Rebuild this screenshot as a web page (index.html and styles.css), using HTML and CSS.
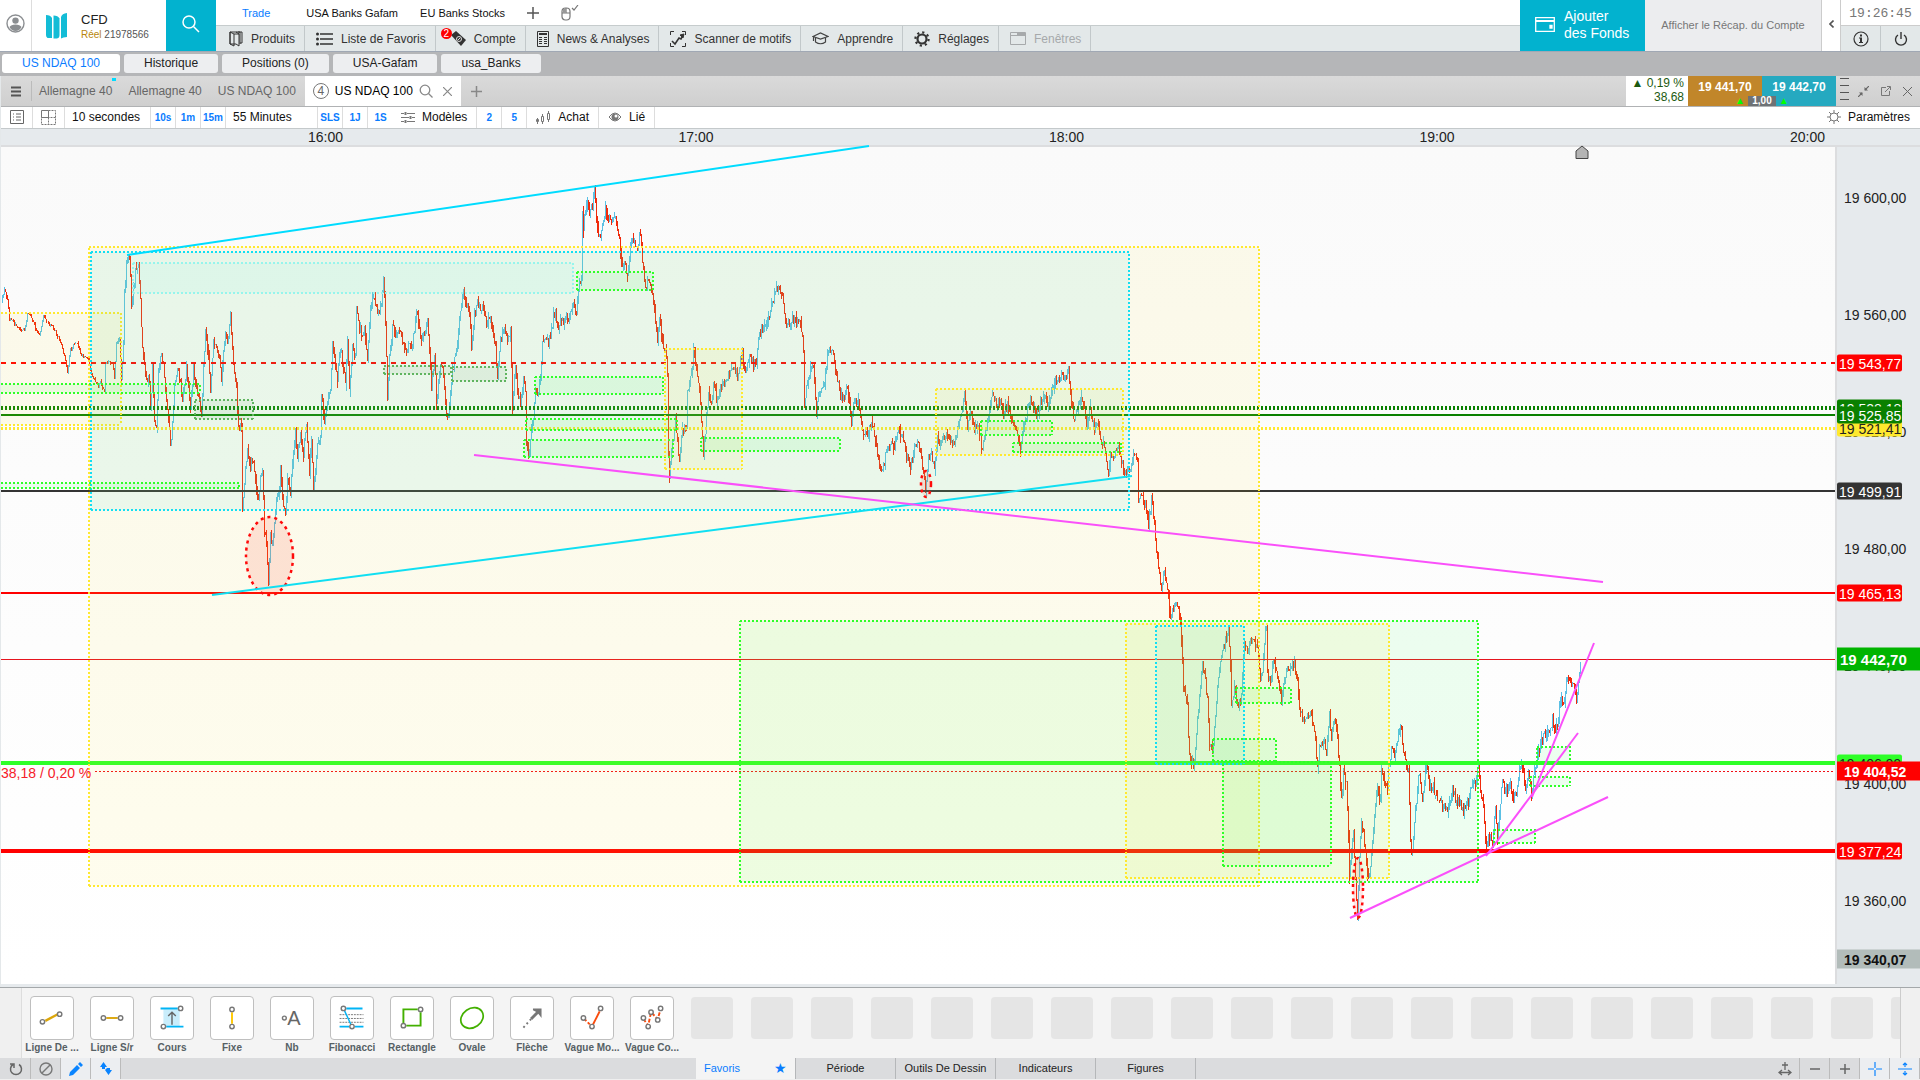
FILE: index.html
```html
<!DOCTYPE html>
<html lang="fr">

<head>
  <meta charset="UTF-8">
  <meta name="viewport" content="width=device-width, initial-scale=1.0">
  <title>US NDAQ 100</title>
  <link rel="stylesheet" href="styles.css">
</head>

<body>
  <!-- Header -->
  <header class="header">
    <button class="avatar" aria-label="Profil">
      <svg width="19" height="19" viewBox="0 0 19 19"><circle cx="9.5" cy="9.5" r="8.5" fill="#fff" stroke="#8b8e91" stroke-width="1.4"/><circle cx="9.5" cy="6.6" r="3.2" fill="#8b8e91"/><path d="M3.5 13q1.500-2.500 6-2.500t6 2.500q-2 4-6 4t-6-4z" fill="#8b8e91"/></svg>
    </button>
    <div class="brand">
      <svg width="22" height="26" viewBox="0 0 22 26" fill="#13bcd6"><path d="M0 2q4.500 0 6 3v20H1.500Q0 24 0 22z"/><path d="M7.500 2.500q4.500 0 6 3V22q0 3-2.500 3.500H7.500z"/><path d="M15 4q1-3.500 6-4v24q-4 0-6 1.500z"/></svg>
      <div>
        <div class="brand-name">CFD</div>
        <div class="brand-account"><span>Réel</span> 21978566</div>
      </div>
    </div>
    <button class="search" aria-label="Rechercher">
      <svg width="20" height="20" viewBox="0 0 20 20" fill="none" stroke="#fff" stroke-width="1.500"><circle cx="8" cy="8" r="6"/><path d="M12.500 12.500L18 18"/></svg>
    </button>
    <div class="header-main">
      <nav class="workspaces">
        <a href="#" class="active">Trade</a>
        <a href="#">USA Banks Gafam</a>
        <a href="#">EU Banks Stocks</a>
        <button aria-label="Ajouter un espace"><svg width="12" height="12" viewBox="0 0 12 12" stroke="#555" stroke-width="1.500"><path d="M6 0v12M0 6h12"/></svg></button>
        <button aria-label="Souris"><svg width="18" height="16" viewBox="0 0 18 16" fill="none" stroke="#777" stroke-width="1.200"><rect x="1" y="3" width="8" height="12" rx="3.500"/><path d="M5 3v5M1 8h8M11 3l2 2 4-5"/><path d="M2 4h3v4H2z" fill="#999" stroke="none"/></svg></button>
      </nav>
      <nav class="menu">
        <button><svg width="14" height="16" viewBox="0 0 14 16" fill="none" stroke="#333"><path d="M1 1h6l3 2v12L7 13H1zM1 1l4 2v12L1 13zM5 3h5M7 1h4v12M9 1h4v11h-2"/></svg>Produits</button>
        <button><svg width="17" height="14" viewBox="0 0 17 14" fill="#333"><circle cx="1.500" cy="2" r="1.500"/><circle cx="1.500" cy="7" r="1.500"/><circle cx="1.500" cy="12" r="1.500"/><path d="M4 1.300h13v1.400H4zM4 6.300h13v1.400H4zM4 11.300h13v1.400H4z"/></svg>Liste de Favoris</button>
        <button class="menu-account"><span class="badge">2</span><svg width="15" height="15" viewBox="0 0 15 15"><path d="M0 4l5-4 10 9-5 6z" fill="#333"/><circle cx="8" cy="8" r="2.500" fill="none" stroke="#ddd"/><path d="M7 9l2-2" stroke="#ddd"/></svg>Compte</button>
        <button><svg width="12" height="16" viewBox="0 0 12 16" fill="none" stroke="#333"><path d="M.5.5h11v15H.5z"/><path d="M2 3h8" stroke-width="2"/><path d="M2 6.500h3M7 6.500h3M2 8.500h3M7 8.500h3M2 10.500h3M7 10.500h3M2 12.500h3M7 12.500h3"/></svg>News &amp; Analyses</button>
        <button><svg width="16" height="16" viewBox="0 0 16 16" fill="none" stroke="#333"><path d="M.5 4V.500H4M12 .5h3.500V4M15.500 12v3.500H12M4 15.500H.500V12"/><path d="M2 10l3 3 4-6 2 1 2-4" stroke-width="1.600"/><path d="M10 4l4-1-1 4z" fill="#333"/></svg>Scanner de motifs</button>
        <button><svg width="17" height="13" viewBox="0 0 17 13" fill="none" stroke="#444" stroke-width="1.200"><path d="M1 4.500L8.500 1 16 4.500 8.500 7zM3.500 6v4q5 3.500 10 0V6M1.500 5v4"/></svg>Apprendre</button>
        <button><svg width="16" height="16" viewBox="0 0 16 16" fill="none" stroke="#333"><circle cx="8" cy="8" r="4.500" stroke-width="2.200"/><circle cx="8" cy="8" r="6.600" stroke-width="2.200" stroke-dasharray="2.200 2.980"/></svg>Réglages</button>
        <button disabled><svg width="16" height="13" viewBox="0 0 16 13" fill="none" stroke="#a6a9ab"><path d="M.5.500h15v12H.500zM.500 3.500h15"/><path d="M7 2h8" stroke-width="2"/></svg>Fenêtres</button>
      </nav>
    </div>
    <button class="funds">
      <svg width="20" height="15" viewBox="0 0 20 15" fill="none" stroke="#fff" stroke-width="1.300"><path d="M.7.700h18.600v13.600H.700z"/><path d="M1 4h18" stroke-width="2"/><path d="M15 8.500h2v2.500h-2z" fill="#fff"/></svg>
      <span>Ajouter<br>des Fonds</span>
    </button>
    <button class="recap">Afficher le Récap. du Compte</button>
    <button class="collapse" aria-label="Réduire"><svg width="5" height="8" viewBox="0 0 5 8" fill="none" stroke="#555" stroke-width="1.600"><path d="M4.500.500L1 4l3.500 3.500"/></svg></button>
    <div class="status">
      <div class="clock">19:26:45</div>
      <div class="status-buttons">
        <button aria-label="Informations"><svg width="16" height="16" viewBox="0 0 16 16"><circle cx="8" cy="8" r="7" fill="none" stroke="#333" stroke-width="1.200"/><path d="M7 3.500h2v2H7zM6 6.500h3v4.500h1v1H6v-1h1V7.500H6z" fill="#333"/></svg></button>
        <button aria-label="Déconnexion"><svg width="14" height="16" viewBox="0 0 14 16" fill="none" stroke="#333" stroke-width="1.400"><path d="M4 4a5.500 5.500 0 1 0 6 0M7 1v7"/></svg></button>
      </div>
    </div>
  </header>

  <nav class="panels">
    <a href="#" class="active">US NDAQ 100</a>
    <a href="#">Historique</a>
    <a href="#">Positions (0)</a>
    <a href="#">USA-Gafam</a>
    <a href="#">usa_Banks</a>
  </nav>

  <!-- Chart window -->
  <main class="window">
    <div class="window-tabs">
      <button class="burger" aria-label="Menu"><svg width="10" height="11" viewBox="0 0 10 11" stroke="#555" stroke-width="2"><path d="M0 1.500h10M0 5.500h10M0 9.500h10"/></svg></button>
      <a href="#" class="window-tab">Allemagne 40<i class="dot"></i></a>
      <a href="#" class="window-tab">Allemagne 40</a>
      <a href="#" class="window-tab">US NDAQ 100</a>
      <div class="window-tab active">
        <span class="count">4</span>US NDAQ 100
        <svg width="14" height="14" viewBox="0 0 14 14" fill="none" stroke="#888" stroke-width="1.300"><circle cx="6" cy="6" r="4.800"/><path d="M9.500 9.500l4 4"/></svg>
        <button aria-label="Fermer"><svg width="9" height="9" viewBox="0 0 9 9" stroke="#888" stroke-width="1.200"><path d="M0 0l9 9M9 0L0 9"/></svg></button>
      </div>
      <button class="add" aria-label="Nouvel onglet"><svg width="11" height="11" viewBox="0 0 11 11" stroke="#888" stroke-width="1.500"><path d="M5.500 0v11M0 5.500h11"/></svg></button>
      <div class="change"><div><span class="up">▲</span> 0,19 %</div><div>38,68</div></div>
      <div class="quotes">
        <button class="sell">19 441,70</button>
        <button class="buy">19 442,70</button>
        <div class="spread"><span>▲</span><b>1,00</b><span>▲</span></div>
      </div>
      <div class="window-tools">
        <svg width="10" height="28" viewBox="0 0 10 28" stroke="#555"><path d="M0 1.500h9M0 8.500h9M0 15.500h9M0 22.500h9"/></svg>
        <button aria-label="Réduire"><svg width="11" height="11" viewBox="0 0 11 11" stroke="#666" fill="#666"><path d="M11 0L7 4M0 11l4-4" stroke-width="1.200"/><path d="M6.500 1v3.500H10zM4.500 10V6.500H1z" stroke="none"/></svg></button>
        <button aria-label="Détacher"><svg width="10" height="10" viewBox="0 0 10 10" fill="none" stroke="#777"><path d="M5 1.500H.500v8h8V5M4 6l5-5M6 .500h3.500V4"/></svg></button>
        <button aria-label="Fermer"><svg width="9" height="9" viewBox="0 0 9 9" stroke="#666"><path d="M0 0l9 9M9 0L0 9"/></svg></button>
      </div>
    </div>

    <div class="toolbar">
      <button class="tool-icon" aria-label="Liste"><svg width="14" height="14" viewBox="0 0 14 14" fill="none" stroke="#666"><path d="M.500.500h13v13H.500zM3 4h1M6 4h5M3 7h1M6 7h5M3 10h1M6 10h5"/></svg></button>
      <button class="tool-icon" aria-label="Disposition"><svg width="16" height="15" viewBox="0 0 16 15" fill="none" stroke="#777"><path d="M.500.500h7v7h-7z"/><path d="M7.500.500h7v14H.500v-7h14M7.500 7.500v7" stroke-dasharray="2 1"/></svg></button>
      <button class="seconds">10 secondes</button>
      <button class="quick">10s</button>
      <button class="quick">1m</button>
      <button class="quick">15m</button>
      <button class="minutes">55 Minutes</button>
      <button class="quick">SLS</button>
      <button class="quick">1J</button>
      <button class="quick last">1S</button>
      <button class="models"><svg width="14" height="13" viewBox="0 0 14 13" stroke="#777"><path d="M0 2.500h3M6 2.500h8M0 6.500h8M11 6.500h3M0 10.500h3M6 10.500h8"/><path d="M4.500 1v3M9.500 5v3M4.500 9v3" stroke-width="2"/></svg>Modèles</button>
      <button class="quick">2</button>
      <button class="quick">5</button>
      <button class="order"><svg width="15" height="13" viewBox="0 0 15 13" fill="none" stroke="#777"><path d="M1.500 7v6M.500 8.500h2v2h-2z"/><path d="M6.500 3v2M6.500 11v2M5.500 5.500h2v5h-2z"/><path d="M12.500 0v2M12.500 9v2M11.500 2.500h2v6h-2z"/></svg>Achat</button>
      <button class="linked"><svg width="14" height="10" viewBox="0 0 14 10"><path d="M1 5q6-8 12 0-6 8-12 0z" fill="none" stroke="#777"/><circle cx="7" cy="5" r="3.500" fill="#777"/><circle cx="8" cy="4" r="1.500" fill="#fff"/></svg>Lié</button>
      <button class="settings"><svg width="14" height="14" viewBox="0 0 14 14" fill="none" stroke="#777"><circle cx="7" cy="7" r="4"/><path d="M7 0v3M7 11v3M0 7h3M11 7h3M2 2l2 2M12 2l-2 2M2 12l2-2M12 12l-2-2"/></svg>Paramètres</button>
    </div>

    <div class="time-axis">
      <span>16:00</span><span>17:00</span><span>18:00</span><span>19:00</span><span>20:00</span>
    </div>

    <div class="chart">
      <div class="plot">
        <svg id="plotSvg" viewBox="1 147 1834 837" preserveAspectRatio="none" role="img" aria-label="US NDAQ 100, 10 secondes"></svg>
        <span class="position-label">38,18 / 0,20 %</span>
      </div>
      <div class="price-axis">
        <div class="price-ticks">
          <span>19 600,00</span><span>19 560,00</span><span>19 520,00</span><span>19 480,00</span><span>19 440,00</span><span>19 400,00</span><span>19 360,00</span>
        </div>
        <div id="priceTags"></div>
      </div>
    </div>
  </main>

  <!-- Drawing tools -->
  <section class="drawing">
    <div class="drawing-list" id="drawingList">
      <button class="draw"><span><svg viewBox="0 0 44 44"><path d="M15 25l13-7" stroke="#dca60a" stroke-width="2.500"/><g class="node"><circle cx="12" cy="26" r="2.300"/><circle cx="30" cy="18" r="2.300"/></g></svg></span>Ligne De ...</button>
      <button class="draw"><span><svg viewBox="0 0 44 44"><path d="M16 22h12" stroke="#dca60a" stroke-width="2"/><g class="node"><circle cx="13" cy="22" r="2.300"/><circle cx="31" cy="22" r="2.300"/></g></svg></span>Ligne S/r</button>
      <button class="draw"><span><svg viewBox="0 0 44 44"><path d="M13 13h17v18H13z" fill="#c9edfb"/><path d="M10 12h18M16 31h18" stroke="#00b4f5" stroke-width="2"/><path d="M22 29V16M18 20l4-4 4 4" stroke="#666" stroke-width="1.500" fill="none"/><g class="node"><circle cx="31" cy="12" r="2.300"/><circle cx="13" cy="31" r="2.300"/></g></svg></span>Cours</button>
      <button class="draw"><span><svg viewBox="0 0 44 44"><path d="M22 16v12" stroke="#ffc800" stroke-width="2"/><g class="node"><circle cx="22" cy="13" r="2.300"/><circle cx="22" cy="31" r="2.300"/></g></svg></span>Fixe</button>
      <button class="draw"><span class="letter">A<svg viewBox="0 0 44 44"><g class="node"><circle cx="14" cy="22" r="2"/></g></svg></span>Nb</button>
      <button class="draw"><span><svg viewBox="0 0 44 44"><path d="M16 12h17M9 31h10M25 31h9" stroke="#00b4f5" stroke-width="2"/><path d="M9 18.500h25M9 22.500h25M9 26.500h25" stroke="#777" stroke-dasharray="2 1"/><path d="M14 14l7 15" stroke="#00b4f5" stroke-width="1.500"/><g class="node"><circle cx="13" cy="12" r="2.300"/><circle cx="22" cy="31" r="2.300"/></g></svg></span>Fibonacci</button>
      <button class="draw"><span><svg viewBox="0 0 44 44"><path d="M28 13H13v15M16 30h15V16" fill="none" stroke="#43b000" stroke-width="2"/><g class="node"><circle cx="31" cy="13" r="2.300"/><circle cx="13" cy="30" r="2.300"/></g></svg></span>Rectangle</button>
      <button class="draw"><span><svg viewBox="0 0 44 44"><ellipse cx="22" cy="22" rx="12.500" ry="10" transform="rotate(-35 22 22)" fill="none" stroke="#43b000" stroke-width="1.800"/></svg></span>Ovale</button>
      <button class="draw"><span><svg viewBox="0 0 44 44"><path d="M13 32l9-10" stroke="#777" stroke-width="2" stroke-dasharray="2 3"/><path d="M21 23l9-9" stroke="#777" stroke-width="3"/><path d="M23 12h9v10l-3-4-2-2-4-2z" fill="#777"/></svg></span>Flèche</button>
      <button class="draw"><span><svg viewBox="0 0 44 44"><path d="M14 23l7 7" stroke="#fa4b0c" stroke-width="2" stroke-dasharray="3 2"/><path d="M23 29l7-14" stroke="#fa4b0c" stroke-width="2"/><g class="node"><circle cx="13" cy="22" r="2.300"/><circle cx="31" cy="12" r="2.300"/><circle cx="22" cy="31" r="2.300"/></g></svg></span>Vague Mo...</button>
      <button class="draw"><span><svg viewBox="0 0 44 44"><path d="M13 23l5 7 3-14 7 7 3-10" fill="none" stroke="#fa4b0c" stroke-width="2" stroke-dasharray="4 2"/><g class="node"><circle cx="13" cy="22" r="2.300"/><circle cx="18" cy="31" r="2.300"/><circle cx="21" cy="16" r="2.300"/><circle cx="28" cy="24" r="2.300"/><circle cx="31" cy="12" r="2.300"/></g></svg></span>Vague Co...</button>
    </div>
  </section>

  <footer class="footer">
    <div class="footer-buttons">
      <button aria-label="Réinitialiser"><svg width="14" height="14" viewBox="0 0 14 14" fill="none" stroke="#666" stroke-width="1.500"><path d="M4 2.500A5.500 5.500 0 1 0 10 2.500M1 2h4v4"/></svg></button>
      <button aria-label="Effacer"><svg width="14" height="14" viewBox="0 0 14 14" fill="none" stroke="#777" stroke-width="1.400"><circle cx="7" cy="7" r="6"/><path d="M3 11l8-8"/></svg></button>
      <button class="on" aria-label="Crayon"><svg width="14" height="14" viewBox="0 0 14 14" fill="#0a84ff"><path d="M0 14l1-4 7-7 3 3-7 7zM9 2l2-2 3 3-2 2z"/></svg></button>
      <button class="on" aria-label="Échelle"><svg width="12" height="13" viewBox="0 0 12 13" fill="#0a84ff"><path d="M0 5l3.500-5L7 5H5v2H2V5zM5 8l2-2V6h3v2h2l-3.500 5z"/></svg></button>
    </div>
    <nav class="footer-tabs">
      <a href="#" class="active">Favoris <span>★</span></a>
      <a href="#">Période</a>
      <a href="#">Outils De Dessin</a>
      <a href="#">Indicateurs</a>
      <a href="#">Figures</a>
    </nav>
    <div class="footer-buttons zoom">
      <button aria-label="Ajuster"><svg width="14" height="14" viewBox="0 0 14 14" fill="none" stroke="#666" stroke-width="1.300"><path d="M7 0v8M4 3h6M1 10.500h12M4 8l-3 2.500L4 13M10 8l3 2.500-3 2.500"/></svg></button>
      <button aria-label="Zoom arrière"><svg width="10" height="10" viewBox="0 0 10 10" stroke="#666" stroke-width="1.500"><path d="M0 5h10"/></svg></button>
      <button aria-label="Zoom avant"><svg width="10" height="10" viewBox="0 0 10 10" stroke="#666" stroke-width="1.500"><path d="M0 5h10M5 0v10"/></svg></button>
      <button class="on" aria-label="Réticule"><svg width="14" height="14" viewBox="0 0 14 14" stroke="#0a84ff" stroke-width="1.200"><path d="M0 7h6M8 7h6M7 0v6M7 8v6"/></svg></button>
      <button class="on" aria-label="Hauteur"><svg width="14" height="14" viewBox="0 0 14 14" fill="none" stroke="#0a84ff" stroke-width="1.200"><path d="M0 7h14M7 1v4M7 9v4M5 3l2-2 2 2M5 11l2 2 2-2"/></svg></button>
    </div>
  </footer>

  <script src="chart.js"></script>
</body>

</html>
```
FILE: styles.css
```css
* {
  margin: 0;
  padding: 0;
  box-sizing: border-box;
}

body {
  font-family: 'Liberation Sans', Arial, sans-serif;
  font-size: 12px;
  color: #222;
  background-color: #f4f4f4;
  display: flex;
  flex-direction: column;
  height: 100vh;
  overflow: hidden;
}

a {
  color: inherit;
  text-decoration: none;
}

button {
  font: inherit;
  color: inherit;
  background: none;
  border: none;
  cursor: pointer;
  white-space: nowrap;
}

svg {
  display: block;
  flex-shrink: 0;
}

/* Header */
.header {
  display: flex;
  height: 52px;
  background: #fff;
  border-bottom: 1px solid #a0a8b4;
}

.avatar {
  width: 32px;
  padding: 0 6px 4px;
  border-right: 1px solid #ddd;
}

.brand {
  width: 134px;
  display: flex;
  align-items: center;
  gap: 13px;
  padding-left: 14px;
}

.brand-name {
  font-size: 13px;
  line-height: 17px;
}

.brand-account {
  font-size: 10px;
  line-height: 13px;
  color: #555;
}

.brand-account span {
  color: #b8860b;
}

.search {
  width: 50px;
  padding: 0 15px 4px;
  background: #02b2cf;
}

.header-main {
  flex: 1;
}

.workspaces {
  height: 26px;
  display: flex;
  align-items: center;
  padding-left: 26px;
  font-size: 11px;
  border-bottom: 1px solid #c6cccd;
}

.workspaces a {
  margin-right: 22px;
  color: #111;
}

.workspaces .active {
  margin-right: 36px;
  color: #0a7cff;
}

.workspaces button {
  margin-right: 22px;
}

.menu {
  display: flex;
  height: 25px;
  background: #e3e8e9;
  color: #333;
}

.menu button {
  display: flex;
  align-items: center;
  gap: 8px;
  padding: 0 9px 0 11px;
  border-right: 1px solid #c2c8ca;
}

.menu button:first-child {
  padding-left: 13px;
}

.menu button:disabled {
  color: #a6a9ab;
}

.menu .menu-account {
  position: relative;
  padding-left: 15px;
}

.badge {
  position: absolute;
  left: 5px;
  top: 2px;
  width: 11px;
  height: 11px;
  border-radius: 50%;
  background: #f00;
  color: #fff;
  font-size: 10px;
  line-height: 11px;
}

.funds {
  width: 125px;
  display: flex;
  align-items: center;
  gap: 9px;
  padding: 0 0 2px 15px;
  background: #02b2cf;
  color: #fff;
  font-size: 14px;
  line-height: 17px;
  text-align: left;
}

.recap {
  width: 177px;
  padding-bottom: 2px;
  background: #ecedef;
  color: #777;
  font-size: 11px;
  border-right: 1px solid #ccc;
}

.collapse {
  width: 19px;
  padding: 0 0 4px 7px;
  border-right: 1px solid #ccc;
}

.status {
  width: 79px;
}

.clock {
  height: 26px;
  line-height: 28px;
  text-align: center;
  font-family: 'Liberation Mono', monospace;
  font-size: 13px;
  color: #777;
  border-bottom: 1px solid #ccc;
}

.status-buttons {
  display: flex;
  height: 25px;
  background: #e3e8e9;
}

.status-buttons button {
  flex: 1;
  display: flex;
  align-items: center;
  justify-content: center;
}

.status-buttons button:first-child {
  border-right: 1px solid #c2c8ca;
}

/* Panel tabs */
.panels {
  display: flex;
  gap: 4px;
  height: 24px;
  padding: 2px;
  background: #b5b6b8;
}

.panels a {
  min-width: 94px;
  height: 19px;
  padding: 0 20px;
  line-height: 18px;
  text-align: center;
  color: #222;
  background: #edeef0;
  border-radius: 3px;
}

.panels .active {
  min-width: 118px;
  color: #0a7cff;
  background: #fff;
}

/* Chart window */
.window {
  flex: 1;
  display: flex;
  flex-direction: column;
  min-height: 0;
  border-left: 1px solid #e4e8ea;
}

.window-tabs {
  display: flex;
  align-items: center;
  height: 31px;
  background: linear-gradient(#dadada, #cfcfcf);
  border-bottom: 1px solid #b0b2b4;
  color: #666;
}

.burger {
  width: 31px;
  height: 20px;
  padding-left: 10px;
  border-right: 1px solid #bbb;
}

.window-tab {
  position: relative;
  margin-left: 7px;
  margin-right: 9px;
}

.window-tab.active {
  display: flex;
  align-items: center;
  height: 30px;
  gap: 6px;
  margin: 0;
  padding: 0 9px 0 8px;
  color: #000;
  background: #fff;
}

.window-tab button {
  margin-left: 4px;
}

.dot {
  position: absolute;
  right: -4px;
  top: -6px;
  width: 4px;
  height: 3px;
  background: #00dcff;
}

.count {
  width: 16px;
  height: 16px;
  line-height: 14px;
  text-align: center;
  border: 1px solid #777;
  border-radius: 50%;
  color: #666;
}

.add {
  margin-left: 10px;
}

.change {
  width: 62px;
  height: 30px;
  margin-left: auto;
  padding-right: 4px;
  text-align: right;
  line-height: 14px;
  color: #1c5a10;
  background: #fff;
}

.up {
  font-size: 12px;
}

.quotes {
  position: relative;
  display: flex;
  height: 30px;
  color: #fff;
  font-weight: bold;
}

.sell,
.buy {
  width: 74px;
  padding-bottom: 9px;
  background: #c1862a;
}

.buy {
  background: #25a9c0;
}

.spread {
  position: absolute;
  left: 0;
  right: 0;
  bottom: 0;
  display: flex;
  justify-content: center;
  gap: 3px;
  line-height: 10px;
  font-size: 10px;
}

.spread span {
  color: #0f0;
}

.spread b {
  width: 28px;
  text-align: center;
  background: #6e7275;
}

.window-tools {
  display: flex;
  align-items: center;
  gap: 12px;
  width: 84px;
  padding-left: 4px;
}

.window-tools svg:first-child {
  margin-right: -4px;
}

.window-tools button svg:first-child {
  margin-right: 0;
}

.toolbar {
  display: flex;
  height: 22px;
  background: #fff;
  border-bottom: 1px solid #c4c9cb;
  color: #111;
}

.toolbar button {
  display: flex;
  align-items: center;
  gap: 7px;
  padding-bottom: 1px;
  border-right: 1px solid #ddd;
}

.toolbar .tool-icon {
  width: 32px;
  justify-content: center;
}

.toolbar .seconds {
  width: 86px;
  padding-left: 7px;
}

.toolbar .quick {
  width: 25px;
  justify-content: center;
  color: #0a7cff;
  font-size: 10px;
  font-weight: bold;
}

.toolbar .last {
  border-right: none;
}

.toolbar .minutes {
  width: 92px;
  padding-left: 7px;
}

.toolbar .models {
  padding: 0 9px 1px 8px;
}

.toolbar .order,
.toolbar .linked {
  padding: 0 9px 1px;
}

.toolbar .settings {
  margin-left: auto;
  padding-right: 10px;
  border: none;
}

/* Axes and plot */
.time-axis {
  display: flex;
  justify-content: space-between;
  height: 18px;
  padding: 0 95px 0 307px;
  font-size: 14px;
  line-height: 16px;
  background: #e6eaed;
  border-bottom: 2px solid #dcdddf;
}

.chart {
  flex: 1;
  display: flex;
  min-height: 0;
  background: #e6eaed;
  padding-bottom: 3px;
}

.plot {
  position: relative;
  flex: 1;
  background: linear-gradient(#fafafa, #fff);
}

.plot svg {
  width: 100%;
  height: 100%;
  overflow: visible;
}

.position-label {
  position: absolute;
  left: 0;
  top: 74%;
  font-size: 14px;
  line-height: 14px;
  color: #f5202a;
}

.price-axis {
  position: relative;
  width: 85px;
  font-size: 14px;
  border-left: 2px solid #dcdddf;
}

.price-ticks {
  display: flex;
  flex-direction: column;
  justify-content: space-between;
  height: 91%;
  padding: 43px 0 0 7px;
  line-height: 16px;
}

.tag {
  position: absolute;
  left: 0;
  width: 65px;
  height: 17px;
  line-height: 18px;
  padding-left: 2px;
  transform: translateY(-50%);
  border-radius: 2px;
  color: #fff;
  overflow: hidden;
  white-space: nowrap;
}

.tag.wide {
  width: 100%;
  height: 19px;
  line-height: 20px;
  padding-left: 7px;
  border-radius: 0;
  font-weight: bold;
}

.tag.last-price {
  height: 23px;
  line-height: 24px;
  padding-left: 3px;
  font-size: 15px;
}

/* Drawing tools */
.drawing {
  height: 71px;
  padding: 0 19px 0 21px;
  background: #f0f0f0;
  border-top: 1px solid #a4a8aa;
}

.drawing-list {
  display: flex;
  height: 100%;
  overflow: hidden;
  background: #f4f4f4;
  border-left: 1px solid #ddd;
  border-right: 1px solid #ccc;
}

.draw,
.draw-empty {
  flex: 0 0 60px;
  padding-top: 8px;
}

.draw {
  display: flex;
  flex-direction: column;
  align-items: center;
  font-size: 10px;
  font-weight: bold;
  line-height: 14px;
  color: #566064;
}

.draw span {
  position: relative;
  width: 44px;
  height: 44px;
  margin-bottom: 1px;
  background: #fff;
  border: 1px solid #bfbfbf;
  border-radius: 4px;
}

.draw svg {
  width: 42px;
  height: 42px;
}

.draw .letter {
  padding-left: 4px;
  font-size: 20px;
  font-weight: normal;
  line-height: 42px;
  color: #666;
}

.letter svg {
  position: absolute;
  left: 0;
  top: 0;
}

.node circle {
  fill: #fff;
  stroke: #777;
  stroke-width: 1.5;
}

.draw-empty::before {
  content: '';
  display: block;
  width: 42px;
  height: 42px;
  margin: 1px auto 0;
  background: #e5e5e5;
  border-radius: 4px;
}

/* Footer */
.footer {
  display: flex;
  justify-content: space-between;
  height: 22px;
  padding-left: 1px;
  background: #dbdcde;
  border-bottom: 1px solid #efefef;
}

.footer-buttons,
.footer-tabs {
  display: flex;
}

.footer-buttons {
  width: 695px;
}

.footer-buttons.zoom {
  width: auto;
  margin-left: auto;
}

.footer-buttons button {
  width: 30px;
  display: flex;
  align-items: center;
  justify-content: center;
  border-right: 1px solid #bbb;
}

.footer-buttons .on {
  background: #eceef1;
}

.footer-tabs a {
  width: 100px;
  line-height: 20px;
  text-align: center;
  font-size: 11px;
  border-right: 1px solid #b5b7b9;
}

.footer-tabs .active {
  display: flex;
  justify-content: space-between;
  padding: 0 8px;
  color: #0a7cff;
  background: #f4f4f4;
}

.footer-tabs span {
  font-size: 14px;
}
```
FILE: chart.js
```js
const svg = document.getElementById('plotSvg');
const tags = document.getElementById('priceTags');
const drawingList = document.getElementById('drawingList');

// Price scale of the plot
const PRICE_TOP = 19617.4;
const PRICE_RANGE = 285.7;
const pricePct = (price) => (PRICE_TOP - price) / PRICE_RANGE * 100;
const priceY = (price) => Math.round(147 + 837 * pricePct(price) / 100);

function add(name, attrs) {
  const el = document.createElementNS('http://www.w3.org/2000/svg', name);
  Object.entries(attrs).forEach(([key, value]) => el.setAttribute(key, value));
  svg.appendChild(el);
}

// Turning points of the price: x y
const swings = `2 303 5 290 8 300 10 318 14 322 19 328 25 332 28 312 32 318 36 328 40 335 44 317 48 323 52 325 57 333
62 345 66 360 68 374 71 350 74 345 78 342 81 354 86 358 89 360 91 372 95 380 99 387 101 381 105 392 106 364 110 362
113 362 115 378 117 345 120 338 122 380 124 340 125 290 127 265 129 252 131 270 132 310 134 290 136 272 139 265
141 300 142 330 144 360 146 375 150 385 151 410 153 370 155 425 157 430 159 370 162 350 164 365 167 395 169 420
171 445 173 425 175 385 178 372 181 380 183 405 187 370 189 385 191 410 194 370 197 390 200 400 202 418 204 370
206 330 209 355 211 390 214 340 217 345 220 362 222 380 224 350 226 338 229 340 231 310 233 350 235 375 237 390
239 425 242 430 243 510 246 470 248 450 251 470 252 455 255 470 259 500 261 480 263 475 265 530 267 545 268 560
269 588 271 530 273 545 275 520 277 500 280 490 281 465 284 510 286 515 288 475 291 495 294 450 296 430 298 455
301 430 304 455 307 425 310 475 312 440 314 490 316 470 318 440 321 435 322 395 325 420 328 400 331 390 333 345
336 365 338 380 341 348 344 370 346 380 348 340 350 390 353 350 356 355 357 310 359 320 362 340 365 330 368 360
371 310 375 295 378 315 381 310 384 280 386 320 388 398 390 360 393 325 397 335 401 330 405 350 409 345 413 345
417 310 421 340 425 335 428 320 430 350 432 390 435 355 437 400 440 370 443 365 447 410 449 418 452 380 455 360
458 340 461 310 464 292 467 305 470 312 472 350 475 315 478 305 481 310 484 305 487 325 490 315 493 335 496 345
498 380 501 340 505 330 508 340 511 330 513 405 516 365 519 395 522 400 524 375 526 395 527 440 530 456 532 430
534 420 536 390 538 400 541 380 543 340 546 335 549 345 552 330 555 312 559 325 563 320 567 318 571 315 574 305
577 310 579 295 580 285 582 275 583 218 584 228 587 200 590 215 593 205 595 190 596 205 597 225 599 238 602 232
604 220 606 210 609 215 612 225 615 215 618 230 620 240 622 268 625 260 628 275 631 250 634 240 638 248 641 235
643 260 646 290 649 280 652 290 655 310 658 338 660 320 663 345 666 350 668 375 669 450 670 474 672 450 674 440
676 420 678 440 680 460 683 425 687 430 688 390 690 385 693 370 694 350 696 360 699 380 702 420 704 450 706 430
709 395 712 400 715 380 717 405 720 390 724 385 729 375 733 365 738 375 742 355 746 370 750 355 754 365 757 360
759 340 763 330 767 320 771 310 774 300 777 290 780 285 784 305 787 325 790 330 793 315 797 318 801 320 804 350
805 410 807 385 810 375 814 365 817 410 820 395 825 380 829 350 833 348 836 370 840 390 844 400 848 385 852 420
855 400 859 405 863 430 868 440 872 420 876 440 879 460 882 472 886 455 889 445 892 440 895 450 898 430 902 435
906 450 910 470 914 450 918 440 922 455 926 490 929 460 932 455 935 470 938 440 942 445 946 435 950 440 955 445
960 420 963 410 965 395 968 425 972 415 975 430 979 425 983 450 986 430 990 410 993 395 997 405 1001 400 1004 415
1008 405 1012 420 1016 430 1021 445 1025 425 1029 405 1031 400 1034 410 1037 415 1041 400 1045 395 1049 405
1053 385 1057 380 1062 375 1066 378 1069 370 1072 400 1075 425 1079 400 1083 400 1087 420 1091 410 1095 430
1099 425 1102 440 1106 450 1109 475 1111 455 1114 460 1118 445 1122 460 1125 475 1128 470 1131 474 1134 455
1138 460 1139 500 1143 495 1147 510 1149 528 1152 500 1155 525 1157 555 1160 575 1162 590 1164 570 1168 585
1170 610 1171 620 1174 610 1178 605 1181 620 1182 640 1184 685 1188 700 1189 740 1191 760 1194 765 1196 745
1198 720 1200 700 1203 665 1205 675 1208 700 1210 745 1213 755 1215 730 1217 700 1220 670 1224 645 1229 628
1231 665 1232 710 1235 685 1239 710 1242 690 1245 640 1248 650 1251 640 1255 645 1258 650 1260 670 1262 680
1264 660 1266 630 1267 625 1268 670 1271 685 1274 660 1277 675 1281 690 1282 702 1285 680 1288 670 1292 665
1295 662 1298 680 1300 710 1304 720 1308 715 1312 715 1315 730 1318 768 1320 745 1324 740 1327 750 1330 710
1332 740 1335 715 1338 740 1340 765 1342 800 1344 770 1347 780 1349 840 1350 880 1354 830 1357 900 1358 915
1360 860 1362 820 1366 850 1369 880 1371 870 1374 830 1377 790 1381 800 1382 765 1385 780 1388 790 1389 770
1392 750 1395 755 1398 740 1401 725 1404 750 1407 765 1409 770 1411 840 1412 858 1414 840 1417 800 1420 770
1423 800 1426 770 1428 765 1430 790 1433 785 1438 800 1443 805 1448 810 1453 790 1457 800 1461 805 1465 810
1469 800 1473 785 1477 780 1479 765 1481 790 1484 810 1487 845 1491 835 1493 840 1496 810 1498 840 1501 800
1503 780 1506 795 1510 780 1514 800 1518 790 1521 765 1524 770 1526 790 1529 770 1532 795 1535 770 1538 755
1541 745 1544 735 1549 730 1553 720 1556 735 1559 715 1561 700 1564 705 1568 680 1571 685 1574 680 1577 700
1581 665`.trim().split(/\s+/).map(Number);

let seed = 21;
const random = () => {
  seed = (seed * 16807) % 2147483647;
  return seed / 2147483647;
};

let upPath = '';
let downPath = '';
let open = swings[1];
for (let i = 0; i < swings.length - 2; i += 2) {
  const [x0, y0, x1, y1] = swings.slice(i, i + 4);
  for (let x = x0; x < x1; x++) {
    const noise = x < 124 ? 3 : 9;
    const close = y0 + (y1 - y0) * (x + 1 - x0) / (x1 - x0) + (random() - 0.5) * noise;
    const high = Math.round(Math.min(open, close) - random() * random() * noise);
    const low = Math.round(Math.max(open, close) + random() * random() * noise);
    const bar = `M${x + 0.5} ${high}V${low}`;
    if (close > open) downPath += bar;
    else upPath += bar;
    open = close;
  }
}
add('path', { d: upPath, stroke: '#5bc0e4', fill: 'none', 'shape-rendering': 'crispEdges' });
add('path', { d: downPath, stroke: '#f02a0c', fill: 'none', 'shape-rendering': 'crispEdges' });

// Horizontal levels, in stacking order of their tags
const levels = [
  { price: 19543.77, color: '#ff0000', width: 2, dash: '5 5' },
  { price: 19521.41, color: '#ffe92e', width: 3, dash: '2 2', text: '#222' },
  { price: 19528.18, color: '#0a8000', width: 4, dash: '2 2' },
  { price: 19525.85, color: '#0a8000', width: 2 },
  { price: 19499.91, color: '#333333', width: 2 },
  { price: 19465.13, color: '#ff0000', width: 2 },
  { price: 19442.70, color: '#e6141e', width: 1, tag: '#00b400', kind: 'wide last-price' },
  { price: 19406.99, color: '#2eff28', width: 4, text: '#222' },
  { price: 19404.52, color: '#f01018', width: 1, dash: '2 2', from: 95, tag: '#ff0000', kind: 'wide' },
  { price: 19377.24, color: '#ff0000', width: 4 },
  { price: 19340.07, tag: '#b2bcba', text: '#111', kind: 'wide' }
];

levels.forEach((level) => {
  if (level.width) {
    const y = priceY(level.price) + (level.width % 2) / 2;
    add('line', {
      x1: level.from || 1, x2: 1835, y1: y, y2: y, stroke: level.color, 'stroke-width': level.width,
      'stroke-dasharray': level.dash || 'none', 'shape-rendering': 'crispEdges'
    });
  }
  const tag = document.createElement('div');
  tag.className = `tag ${level.kind || ''}`;
  tag.style.top = `${pricePct(level.price)}%`;
  tag.style.background = level.tag || level.color;
  if (level.text) tag.style.color = level.text;
  tag.textContent = level.price.toFixed(2).replace('.', ',').replace(/^(\d\d)/, '$1 ');
  tags.appendChild(tag);
});

// Zones: left, top, right, bottom
const styles = {
  yellow: ['#ffe92e', 'rgba(255, 230, 40, 0.08)'],
  cyan: ['#12dff2', 'rgba(0, 210, 220, 0.07)'],
  aqua: ['#96f5ec', 'rgba(150, 250, 240, 0.12)'],
  green: ['#2eff28', 'rgba(40, 255, 80, 0.08)'],
  dark: ['#5fb45f', 'rgba(60, 130, 60, 0.07)']
};

const zones = [
  ['yellow', 89, 247, 1259, 886],
  ['yellow', -4, 313, 121, 425],
  ['cyan', 91, 252, 1129, 510],
  ['aqua', 133, 263, 573, 293],
  ['green', 577, 272, 653, 290],
  ['green', -4, 384, 200, 393],
  ['green', -4, 483, 239, 488],
  ['dark', 195, 400, 253, 419],
  ['dark', 384, 366, 451, 374],
  ['dark', 452, 367, 506, 381],
  ['green', 535, 377, 663, 394],
  ['green', 526, 419, 677, 430],
  ['green', 524, 440, 673, 457],
  ['yellow', 665, 349, 742, 469],
  ['green', 701, 438, 840, 451],
  ['yellow', 936, 389, 1123, 455],
  ['green', 981, 421, 1052, 435],
  ['green', 1013, 443, 1121, 452],
  ['green', 740, 621, 1478, 882],
  ['yellow', 1126, 624, 1389, 878],
  ['cyan', 1156, 626, 1244, 764],
  ['green', 1236, 688, 1291, 703],
  ['green', 1213, 739, 1276, 761],
  ['green', 1223, 762, 1331, 866],
  ['green', 1537, 747, 1570, 762],
  ['green', 1530, 777, 1570, 786],
  ['green', 1494, 830, 1535, 843]
];

zones.forEach(([kind, left, top, right, bottom]) => {
  const x = Math.max(left, 1);
  add('rect', { x, y: top, width: right - x, height: bottom - top, fill: styles[kind][1] });
  // zones that start before the visible range have no left side
  const side = left < 0 ? '' : `M${left} ${bottom}V${top}`;
  add('path', {
    d: `${side}M${x} ${top}H${right}V${bottom}M${x} ${bottom}H${right}`,
    fill: 'none', stroke: styles[kind][0], 'stroke-width': 2, 'stroke-dasharray': '2 2', 'shape-rendering': 'crispEdges'
  });
});

// Ovals
[[269.5, 556, 23.5, 39], [926, 484, 5, 13], [1358, 888, 5, 30]].forEach(([cx, cy, rx, ry]) => {
  add('ellipse', { cx, cy, rx, ry, fill: 'rgba(255, 60, 50, 0.13)', stroke: '#ff0a0a', 'stroke-width': 2.5, 'stroke-dasharray': '3 4' });
});

// Trend lines
[
  ['#00dcff', 127, 255, 869, 146],
  ['#10dff2', 212, 595, 1132, 476],
  ['#fa50fa', 474, 455, 1603, 582],
  ['#fa50fa', 1350, 918, 1608, 797],
  ['#fa50fa', 1486, 856, 1578, 733],
  ['#fa50fa', 1532, 797, 1594, 643]
].forEach(([stroke, x1, y1, x2, y2]) => {
  add('line', { x1, y1, x2, y2, stroke, 'stroke-width': 2 });
});

add('path', { d: 'M1576 158.500V151L1582 146L1588 151V158.500Z', fill: '#b4b4b4', stroke: '#444' });

for (let i = 0; i < 21; i++) {
  const slot = document.createElement('div');
  slot.className = 'draw-empty';
  drawingList.appendChild(slot);
}
```
